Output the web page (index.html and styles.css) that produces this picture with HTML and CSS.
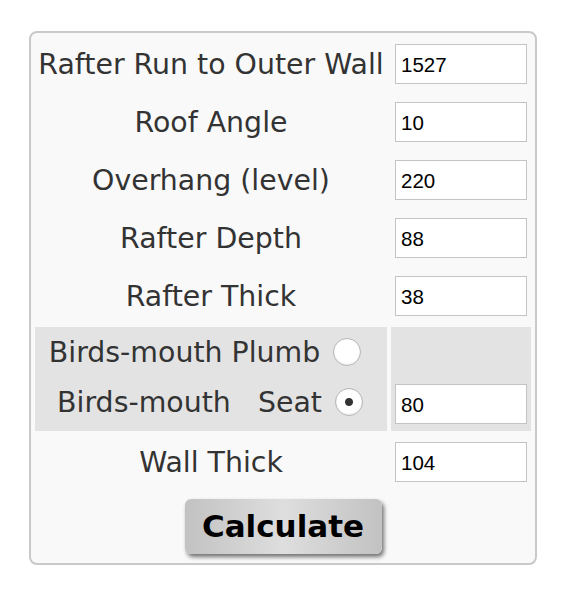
FILE: index.html
```html
<!DOCTYPE html>
<html lang="en">
<head>
    <meta charset="UTF-8">
    <meta name="viewport" content="width=device-width, initial-scale=1.0">
    <title>Rafter Calculator</title>
    <link rel="stylesheet" href="styles.css">
</head>
<body>

    <!-- Rafter form -->
    <div class="calc-box">
        <table class="calc-table">
            <tr>
                <td class="label">Rafter Run to Outer Wall</td>
                <td class="field"><input type="text" value="1527"></td>
            </tr>
            <tr>
                <td class="label">Roof Angle</td>
                <td class="field"><input type="text" value="10"></td>
            </tr>
            <tr>
                <td class="label">Overhang (level)</td>
                <td class="field"><input type="text" value="220"></td>
            </tr>
            <tr>
                <td class="label">Rafter Depth</td>
                <td class="field"><input type="text" value="88"></td>
            </tr>
            <tr>
                <td class="label">Rafter Thick</td>
                <td class="field"><input type="text" value="38"></td>
            </tr>

            <!-- birds-mouth options -->
            <tr class="shade-row">
                <td class="label bm-cell">
                    <div class="bm-line plumb">Birds-mouth Plumb <input type="radio" name="bm" value="plumb"></div>
                    <div class="bm-line seat">Birds-mouth&nbsp;&nbsp;&nbsp;Seat <input type="radio" name="bm" value="seat" checked></div>
                </td>
                <td class="field bottom"><input type="text" value="80"></td>
            </tr>

            <tr>
                <td class="label">Wall Thick</td>
                <td class="field"><input type="text" value="104"></td>
            </tr>
            <tr>
                <td colspan="2" class="button-cell">
                    <button class="calc-button">Calculate</button>
                </td>
            </tr>
        </table>
    </div>

</body>
</html>
```

FILE: styles.css
```css
/* page */
body {
    margin: 0;
    padding: 0;
    background-color: #ffffff;
    font-family: "DejaVu Sans", Verdana, sans-serif;
}

/* outer box */
.calc-box {
    width: 504px;
    margin: 31px 0 0 29px;
    border: 2px solid #c9c9c9;
    border-radius: 8px;
    background-color: #f9f9f9;
}

.calc-table {
    width: 100%;
    border-collapse: separate;
    border-spacing: 4px;
}

.calc-table td {
    padding: 0;
}

/* label column */
.label {
    width: 352px;
    height: 54px;
    text-align: center;
    vertical-align: middle;
    font-size: 28.4px;
    color: #333;
    white-space: nowrap;
}

/* input column */
.field {
    text-align: center;
    vertical-align: middle;
}

.field input {
    width: 132px;
    height: 40px;
    box-sizing: border-box;
    padding: 3px 5px 1px;
    border: 1px solid #c4c4c4;
    background-color: #fff;
    font-family: "Liberation Sans", Arial, sans-serif;
    font-size: 20.5px;
    color: #000;
}

.field.bottom {
    vertical-align: bottom;
    padding-bottom: 7px;
}

/* grey birds-mouth row */
.shade-row td {
    background-color: #e3e3e3;
}

.bm-cell {
    height: 104px;
    padding: 4px 0 0 0;
    vertical-align: top;
    box-sizing: border-box;
}

.bm-line {
    height: 50px;
    display: flex;
    align-items: center;
    justify-content: center;
}

.bm-line.plumb {
    padding-right: 12px;
}

.bm-line.seat {
    padding-right: 2px;
}

.bm-line input {
    appearance: none;
    -webkit-appearance: none;
    width: 28px;
    height: 28px;
    margin: 0 0 0 13px;
    border: 1px solid #b5b5b5;
    border-radius: 50%;
    background-color: #fff;
    box-shadow: inset 0 -1px 2px rgba(0, 0, 0, 0.08);
}

.bm-line input:checked {
    background: radial-gradient(circle, #333 0, #333 3.5px, #fff 4.5px);
}

/* button */
.button-cell {
    height: 66px;
    text-align: center;
    vertical-align: middle;
}

.calc-button {
    width: 197px;
    height: 55px;
    border: none;
    border-radius: 6px;
    background: linear-gradient(to right, #c2c2c2, #dedede 50%, #c2c2c2);
    box-shadow: 2px 3px 4px rgba(0, 0, 0, 0.55);
    font-family: "DejaVu Sans", Verdana, sans-serif;
    font-weight: bold;
    font-size: 31px;
    color: #000;
    cursor: pointer;
}
```
